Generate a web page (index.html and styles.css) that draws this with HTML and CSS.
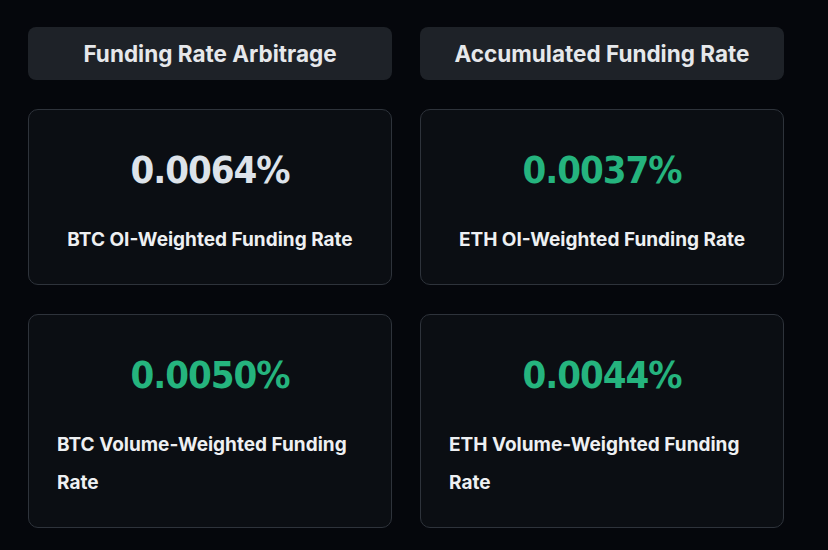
FILE: index.html
```html
<!DOCTYPE html>
<html>
<head>
<meta charset="utf-8">
<link rel="stylesheet" href="styles.css">
</head>
<body>
<div class="page">
  <div class="tab">Funding Rate Arbitrage</div>
  <div class="tab">Accumulated Funding Rate</div>
  <div class="card">
    <div class="value">0.0064%</div>
    <div class="label">BTC OI-Weighted Funding Rate</div>
  </div>
  <div class="card">
    <div class="value green">0.0037%</div>
    <div class="label">ETH OI-Weighted Funding Rate</div>
  </div>
  <div class="card">
    <div class="value green">0.0050%</div>
    <div class="label">BTC Volume-Weighted Funding Rate</div>
  </div>
  <div class="card">
    <div class="value green">0.0044%</div>
    <div class="label">ETH Volume-Weighted Funding Rate</div>
  </div>
</div>
</body>
</html>
```

FILE: styles.css
```css
html, body {
  margin: 0;
  background: #05070c;
}
body {
  font-family: Inter, "Noto Sans", sans-serif;
  color: #eaecef;
}
.page {
  display: grid;
  grid-template-columns: 364px 364px;
  column-gap: 28px;
  row-gap: 29px;
  padding: 27px 0 0 28px;
}
.tab {
  height: 53px;
  background: #1e2228;
  border-radius: 8px;
  display: flex;
  align-items: center;
  justify-content: center;
  font-size: 22.5px;
  font-weight: 700;
  color: #e6e8eb;
}
.card {
  box-sizing: border-box;
  border: 1px solid #2e333b;
  border-radius: 10px;
  background: #0b0e13;
  padding: 37px 28px 25px;
  display: flex;
  flex-direction: column;
  align-items: center;
}
.value {
  font-family: "DejaVu Sans Condensed", "DejaVu Sans", sans-serif;
  font-weight: 700;
  font-size: 38px;
  line-height: 46px;
  letter-spacing: -1px;
  color: #dde3ea;
}
.value.green {
  color: #25b47e;
}
.label {
  margin-top: 28px;
  font-size: 19px;
  font-weight: 700;
  line-height: 38px;
  color: #eef0f2;
  text-align: left;
}
```
